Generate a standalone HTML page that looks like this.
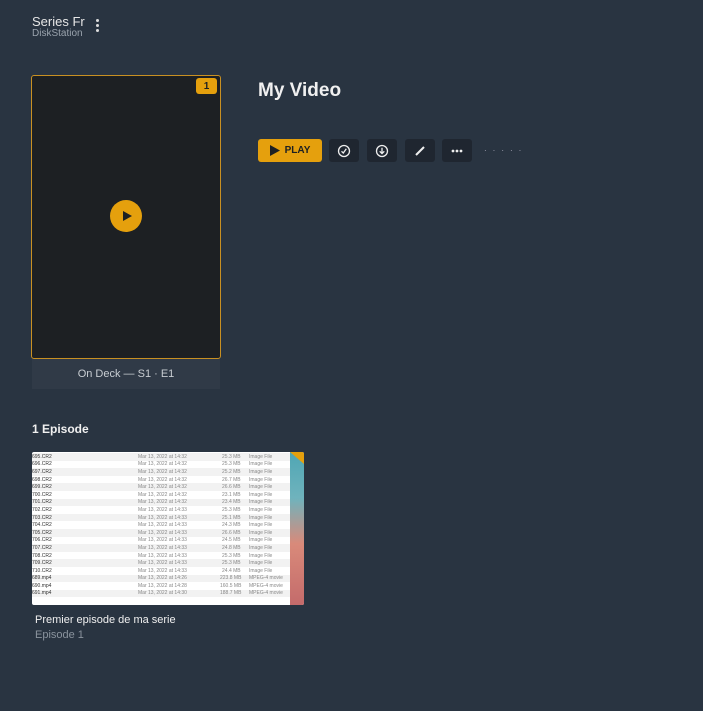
<!DOCTYPE html>
<html><head><meta charset="utf-8"><style>
*{margin:0;padding:0;box-sizing:border-box}
body{width:703px;height:711px;background:#293441;font-family:"Liberation Sans",sans-serif;color:#fff;position:relative;overflow:hidden}
.a{position:absolute}
.btn{position:absolute;top:139px;height:23px;width:30px;background:#1f2630;border-radius:3px;display:flex;align-items:center;justify-content:center}
.rows div{height:7.6px;font-size:5px;color:#888;display:flex;align-items:center;white-space:nowrap}
.rows div:nth-child(odd){background:#f2f2f2}
.rows span{position:absolute}
</style></head><body>
<div class="a" style="left:32px;top:14px;font-size:13px;color:#e6e6e6">Series Fr</div>
<div class="a" style="left:32px;top:28px;font-size:10px;color:#9aa3ad">DiskStation</div>
<div class="a" style="left:96px;top:19px;width:4px">
<div style="width:3px;height:3px;border-radius:50%;background:#ddd;margin-bottom:2px"></div><div style="width:3px;height:3px;border-radius:50%;background:#ddd;margin-bottom:2px"></div><div style="width:3px;height:3px;border-radius:50%;background:#ddd"></div></div>

<div class="a" style="left:31px;top:75px;width:190px;height:284px;background:#1d2023;border:1px solid #c89022;border-radius:3px"></div>
<div class="a" style="left:196px;top:78px;width:21px;height:16px;background:#e5a00d;border-radius:3px;color:#1d2023;font-size:10px;font-weight:bold;display:flex;align-items:center;justify-content:center">1</div>
<div class="a" style="left:110px;top:200px;width:32px;height:32px;background:#e5a00d;border-radius:50%"><svg width="32" height="32"><path d="M13 11 L22 16 L13 21Z" fill="#1d2023"/></svg></div>
<div class="a" style="left:32px;top:359px;width:188px;height:30px;background:#303a47;color:#c8cdd2;font-size:11px;text-align:center;line-height:30px">On Deck — S1 · E1</div>

<div class="a" style="left:258px;top:80px;font-size:19px;font-weight:bold;color:#f0f0f0">My Video</div>
<div class="a" style="left:258px;top:139px;width:64px;height:23px;background:#e5a00d;border-radius:3px;color:#1d2023;font-size:10px;font-weight:bold;display:flex;align-items:center;justify-content:center;gap:5px"><svg width="10" height="11"><path d="M0 0 L10 5.5 L0 11Z" fill="#1d2023"/></svg>PLAY</div>
<div class="btn" style="left:329px"><svg width="14" height="14"><circle cx="7" cy="7" r="5.5" fill="none" stroke="#eee" stroke-width="1.3"/><path d="M4.5 7.3 L6.3 9 L9.3 4.8" fill="none" stroke="#eee" stroke-width="1.3"/></svg></div>
<div class="btn" style="left:367px"><svg width="14" height="14"><circle cx="7" cy="7" r="5.5" fill="none" stroke="#eee" stroke-width="1.3"/><path d="M7 3.8 V9.5 M4.7 7.3 L7 9.6 L9.3 7.3" fill="none" stroke="#eee" stroke-width="1.3"/></svg></div>
<div class="btn" style="left:405px"><svg width="14" height="14"><path d="M3 11 L11 3" stroke="#eee" stroke-width="2"/></svg></div>
<div class="btn" style="left:442px"><svg width="14" height="14"><circle cx="3" cy="7" r="1.4" fill="#eee"/><circle cx="7" cy="7" r="1.4" fill="#eee"/><circle cx="11" cy="7" r="1.4" fill="#eee"/></svg></div>
<div class="a" style="left:484px;top:146px;font-size:8px;color:#aab;letter-spacing:6px">·····</div>

<div class="a" style="left:32px;top:422px;font-size:12px;font-weight:bold;color:#f0f0f0">1 Episode</div>
<div class="a" style="left:32px;top:452px;width:272px;height:153px;background:#fff;border-radius:2px;overflow:hidden">
<div class="a" style="left:258px;top:0;width:14px;height:153px;background:linear-gradient(#4fa6b4,#6fb3bd 30%,#d98a7a 60%,#c46b6b)"></div>
<div class="a" style="left:258px;top:0;width:0;height:0;border-left:14px solid transparent;border-top:12px solid #e5a00d"></div>
<div class="rows a" style="left:0;top:1px;width:258px">
<div><span style="left:0;color:#333">695.CR2</span><span style="left:106px">Mar 13, 2022 at 14:32</span><span style="left:190px">25.3 MB</span><span style="left:217px">Image File</span></div>
<div><span style="left:0;color:#333">696.CR2</span><span style="left:106px">Mar 13, 2022 at 14:32</span><span style="left:190px">25.3 MB</span><span style="left:217px">Image File</span></div>
<div><span style="left:0;color:#333">697.CR2</span><span style="left:106px">Mar 13, 2022 at 14:32</span><span style="left:190px">25.2 MB</span><span style="left:217px">Image File</span></div>
<div><span style="left:0;color:#333">698.CR2</span><span style="left:106px">Mar 13, 2022 at 14:32</span><span style="left:190px">26.7 MB</span><span style="left:217px">Image File</span></div>
<div><span style="left:0;color:#333">699.CR2</span><span style="left:106px">Mar 13, 2022 at 14:32</span><span style="left:190px">26.6 MB</span><span style="left:217px">Image File</span></div>
<div><span style="left:0;color:#333">700.CR2</span><span style="left:106px">Mar 13, 2022 at 14:32</span><span style="left:190px">23.1 MB</span><span style="left:217px">Image File</span></div>
<div><span style="left:0;color:#333">701.CR2</span><span style="left:106px">Mar 13, 2022 at 14:32</span><span style="left:190px">23.4 MB</span><span style="left:217px">Image File</span></div>
<div><span style="left:0;color:#333">702.CR2</span><span style="left:106px">Mar 13, 2022 at 14:33</span><span style="left:190px">25.3 MB</span><span style="left:217px">Image File</span></div>
<div><span style="left:0;color:#333">703.CR2</span><span style="left:106px">Mar 13, 2022 at 14:33</span><span style="left:190px">25.1 MB</span><span style="left:217px">Image File</span></div>
<div><span style="left:0;color:#333">704.CR2</span><span style="left:106px">Mar 13, 2022 at 14:33</span><span style="left:190px">24.3 MB</span><span style="left:217px">Image File</span></div>
<div><span style="left:0;color:#333">705.CR2</span><span style="left:106px">Mar 13, 2022 at 14:33</span><span style="left:190px">26.6 MB</span><span style="left:217px">Image File</span></div>
<div><span style="left:0;color:#333">706.CR2</span><span style="left:106px">Mar 13, 2022 at 14:33</span><span style="left:190px">24.5 MB</span><span style="left:217px">Image File</span></div>
<div><span style="left:0;color:#333">707.CR2</span><span style="left:106px">Mar 13, 2022 at 14:33</span><span style="left:190px">24.8 MB</span><span style="left:217px">Image File</span></div>
<div><span style="left:0;color:#333">708.CR2</span><span style="left:106px">Mar 13, 2022 at 14:33</span><span style="left:190px">25.3 MB</span><span style="left:217px">Image File</span></div>
<div><span style="left:0;color:#333">709.CR2</span><span style="left:106px">Mar 13, 2022 at 14:33</span><span style="left:190px">25.3 MB</span><span style="left:217px">Image File</span></div>
<div><span style="left:0;color:#333">710.CR2</span><span style="left:106px">Mar 13, 2022 at 14:33</span><span style="left:190px">24.4 MB</span><span style="left:217px">Image File</span></div>
<div><span style="left:0;color:#333">689.mp4</span><span style="left:106px">Mar 13, 2022 at 14:26</span><span style="left:188px">223.8 MB</span><span style="left:217px">MPEG-4 movie</span></div>
<div><span style="left:0;color:#333">690.mp4</span><span style="left:106px">Mar 13, 2022 at 14:28</span><span style="left:188px">160.5 MB</span><span style="left:217px">MPEG-4 movie</span></div>
<div><span style="left:0;color:#333">691.mp4</span><span style="left:106px">Mar 13, 2022 at 14:30</span><span style="left:188px">188.7 MB</span><span style="left:217px">MPEG-4 movie</span></div>
</div></div>
<div class="a" style="left:35px;top:614px;font-size:11px;color:#f0f0f0">Premier episode de ma serie</div>
<div class="a" style="left:35px;top:629px;font-size:11px;color:#8a939d">Episode 1</div>
</body></html>
